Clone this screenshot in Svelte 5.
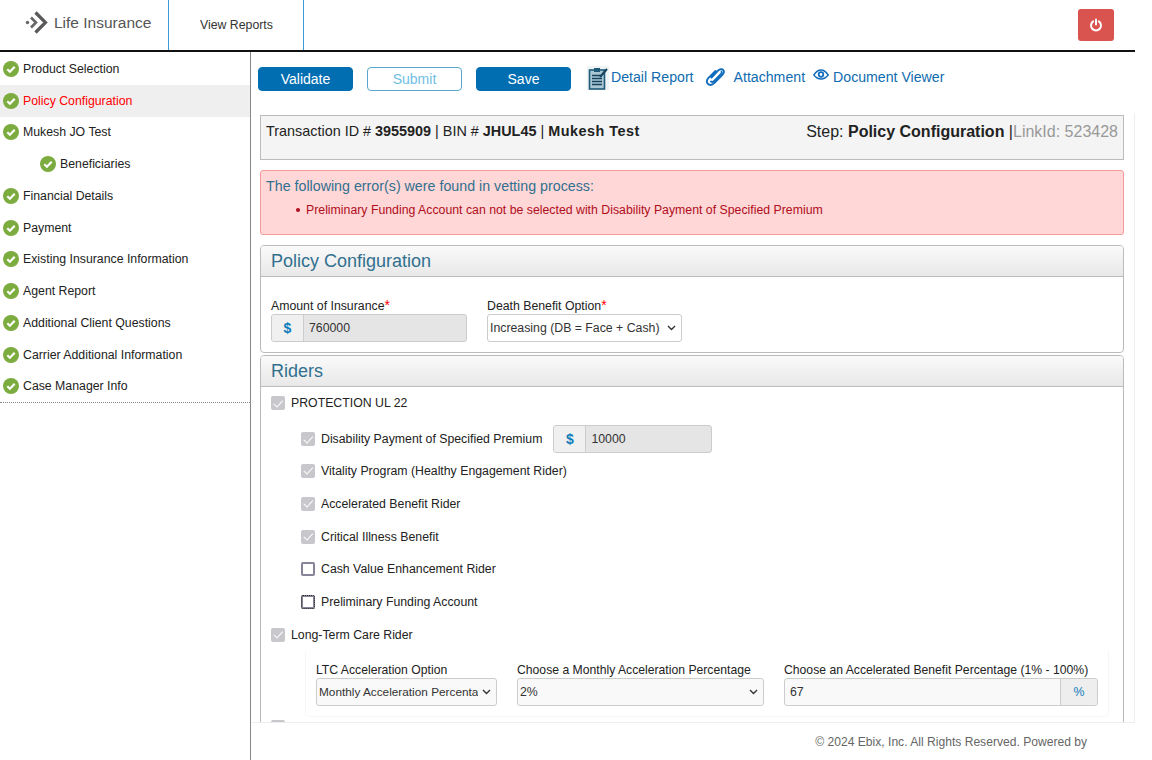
<script>
	const steps = [
		{ label: 'Product Selection' },
		{ label: 'Policy Configuration', active: true },
		{ label: 'Mukesh JO Test' },
		{ label: 'Beneficiaries', child: true },
		{ label: 'Financial Details' },
		{ label: 'Payment' },
		{ label: 'Existing Insurance Information' },
		{ label: 'Agent Report' },
		{ label: 'Additional Client Questions' },
		{ label: 'Carrier Additional Information' },
		{ label: 'Case Manager Info' }
	];

	const subRiders = [
		{ label: 'Vitality Program (Healthy Engagement Rider)', checked: true },
		{ label: 'Accelerated Benefit Rider', checked: true },
		{ label: 'Critical Illness Benefit', checked: true },
		{ label: 'Cash Value Enhancement Rider', checked: false },
		{ label: 'Preliminary Funding Account', checked: false, focus: true }
	];
</script>

<div class="page">
	<header class="topbar">
		<div class="brand">
			<svg class="logo" width="24" height="24" viewBox="0 0 24 24">
				<circle cx="2.5" cy="11.5" r="1.7" fill="#666" />
				<path d="M6 6.500l5 5-5 5" fill="none" stroke="#666" stroke-width="2.600" />
				<path d="M10.500 1.500L20.500 11.500 10.500 21.500" fill="none" stroke="#5a5a5a" stroke-width="3.200" />
			</svg>
			<span class="brand-name">Life Insurance</span>
		</div>
		<div class="nav-tab">View Reports</div>
		<div class="topbar-right">
			<button class="power" aria-label="Log out">
				<svg width="14" height="14" viewBox="0 0 14 14" fill="none" stroke="#fff" stroke-width="2" stroke-linecap="round">
					<path d="M4.200 3.300a5 5 0 1 0 5.600 0" />
					<path d="M7 1.500v5" />
				</svg>
			</button>
		</div>
	</header>

	<div class="body">
		<nav class="sidebar">
			<ul>
				{#each steps as step}
					<li class:active={step.active} class:child={step.child}>
						<svg class="tick" width="16" height="16" viewBox="0 0 16 16">
							<circle cx="8" cy="8" r="8" fill="#7cab3f" />
							<path d="M4.300 8.200l2.600 2.500 4.800-4.900" fill="none" stroke="#fff" stroke-width="2.200" />
						</svg>
						<span>{step.label}</span>
					</li>
				{/each}
			</ul>
		</nav>

		<div class="content">
			<main class="scroll">
				<div class="toolbar">
					<button class="btn primary">Validate</button>
					<button class="btn outline">Submit</button>
					<button class="btn primary">Save</button>
					<a class="tool detail">
						<svg width="22" height="24" viewBox="0 0 22 24">
							<rect width="22" height="24" fill="#eef4f6" />
							<rect x="2.500" y="4" width="15" height="19" fill="#a9c8d4" stroke="#1f5a78" stroke-width="1.600" />
							<rect x="7" y="2" width="6" height="4" fill="#1f5a78" />
							<path d="M5 9.500h10M5 12.500h10M5 15.500h10M5 18.500h10" stroke="#16425c" stroke-width="1.300" />
							<path d="M13 11l7-8" stroke="#16425c" stroke-width="2" />
						</svg>
						<span>Detail Report</span>
					</a>
					<a class="tool attach">
						<svg width="21" height="20" viewBox="0 0 20 20" fill="none" stroke="#0f6cbd" stroke-width="1.900" stroke-linecap="round">
							<path d="M6 10.500l6.500-6.800c1.800-1.800 4.300-1.700 5.200-.7 1 1.200.9 3-.8 4.800l-7.900 8c-2.200 2.200-5 2.500-6.700 1-1.600-1.500-1.200-4 .7-5.900l7-7" />
							<path d="M5.500 14.500c1 .8 2.200.5 3.200-.5l6.800-7c.8-.9 1-1.700.5-2.200" />
						</svg>
					</a>
					<a class="tool label-only">Attachment</a>
					<a class="tool viewer">
						<svg width="16" height="12" viewBox="0 0 16 12" fill="none" stroke="#0f6cbd">
							<path d="M.8 6C3 2.600 5.400 1 8 1s5 1.600 7.200 5C13 8.800 10.600 10 8 10S3 8.800 .8 6z" stroke-width="1.400" />
							<circle cx="8" cy="5.500" r="2.300" stroke-width="1.700" />
						</svg>
						<span>Document Viewer</span>
					</a>
				</div>

				<div class="txn">
					<div>
						Transaction ID # <b>3955909</b> | BIN # <b>JHUL45</b> | <b class="wide">Mukesh Test</b>
					</div>
					<div class="step">
						Step: <b>Policy Configuration</b> |<span class="link-id">LinkId: 523428</span>
					</div>
				</div>

				<div class="errors">
					<p>The following error(s) were found in vetting process:</p>
					<ul>
						<li>Preliminary Funding Account can not be selected with Disability Payment of Specified Premium</li>
					</ul>
				</div>

				<section class="panel">
					<h2>Policy Configuration</h2>
					<div class="panel-body config">
						<div class="field amount">
							<label for="amount">Amount of Insurance<i>*</i></label>
							<div class="group">
								<span class="addon dollar">$</span>
								<input id="amount" value="760000" disabled />
							</div>
						</div>
						<div class="field death">
							<label for="dbo">Death Benefit Option<i>*</i></label>
							<select id="dbo">
								<option>Increasing (DB = Face + Cash)</option>
							</select>
						</div>
					</div>
				</section>

				<section class="panel riders">
					<h2>Riders</h2>
					<div class="panel-body">
						<label class="check top">
							<input type="checkbox" checked disabled />
							<span>PROTECTION UL 22</span>
						</label>

						<div class="sub">
							<div class="check premium">
								<input type="checkbox" checked disabled />
								<span>Disability Payment of Specified Premium</span>
								<div class="group">
									<span class="addon dollar">$</span>
									<input value="10000" disabled aria-label="Premium" />
								</div>
							</div>
							<div class="rows">
								{#each subRiders as rider}
									<label class="check row">
										<input type="checkbox" checked={rider.checked} disabled={rider.checked} class:focus={rider.focus} />
										<span>{rider.label}</span>
									</label>
								{/each}
							</div>
						</div>

						<label class="check top">
							<input type="checkbox" checked disabled />
							<span>Long-Term Care Rider</span>
						</label>

						<div class="ltc-box">
							<div class="field opt">
								<label for="ltc">LTC Acceleration Option</label>
								<select id="ltc" class="soft narrow">
									<option>Monthly Acceleration Percentage</option>
								</select>
							</div>
							<div class="field pct">
								<label for="pct">Choose a Monthly Acceleration Percentage</label>
								<select id="pct" class="soft">
									<option>2%</option>
								</select>
							</div>
							<div class="field ben">
								<label for="ben">Choose an Accelerated Benefit Percentage (1% - 100%)</label>
								<div class="group light">
									<input id="ben" value="67" />
									<span class="addon percent">%</span>
								</div>
							</div>
						</div>

						<div class="check next">
							<input type="checkbox" checked disabled aria-label="Next rider" />
						</div>
					</div>
				</section>
			</main>

			<footer class="footer">© 2024 Ebix, Inc. All Rights Reserved. Powered by</footer>
		</div>
	</div>
</div>

<style>
	:global(body) {
		margin: 0;
		background: #fff;
	}

	.page {
		width: 1152px;
		height: 760px;
		overflow: hidden;
		display: flex;
		flex-direction: column;
		font-family: 'Liberation Sans', Arial, sans-serif;
		color: #222;
		font-size: 12.3px;
	}

	/* header */
	.topbar {
		width: 1135px;
		height: 50px;
		flex: none;
		display: flex;
		border-bottom: 2px solid #111;
	}

	.brand {
		width: 169px;
		display: flex;
		align-items: center;
		box-sizing: border-box;
		padding: 0 0 4px 25px;
		border-right: 1px solid #3a9ad9;
		gap: 5px;
	}

	.brand-name {
		font-size: 15.5px;
		color: #555;
	}

	.nav-tab {
		width: 135px;
		box-sizing: border-box;
		padding: 18px 0 0 31px;
		border-right: 1px solid #3a9ad9;
		color: #333;
	}

	.topbar-right {
		flex: 1;
		display: flex;
		justify-content: flex-end;
		padding: 9px 21px 0 0;
	}

	.power {
		width: 36px;
		height: 32px;
		border: 0;
		border-radius: 3px;
		background: #d9534f;
		padding: 0;
		display: flex;
		align-items: center;
		justify-content: center;
	}

	.body {
		flex: 1;
		display: flex;
		min-height: 0;
	}

	/* sidebar */
	.sidebar {
		width: 250px;
		flex: none;
		border-right: 1px solid #888;
	}

	.sidebar ul {
		list-style: none;
		margin: 1px 0 0;
		padding: 0;
		border-bottom: 1px dotted #888;
	}

	.sidebar li {
		height: 31.75px;
		box-sizing: border-box;
		display: flex;
		align-items: center;
		gap: 4px;
		padding-left: 3px;
		color: #222;
	}

	.sidebar li.child {
		padding-left: 40px;
	}

	.sidebar li.active {
		background: #efefef;
		color: #f00;
	}

	.tick {
		flex: none;
	}

	/* main column */
	.content {
		width: 884px;
		flex: none;
		display: flex;
		flex-direction: column;
		min-height: 0;
	}

	.scroll {
		flex: 1;
		min-height: 0;
		overflow: hidden;
		box-sizing: border-box;
		padding: 0 11px 0 9px;
		background: linear-gradient(#eee, #eee) right 61px / 1px 100% no-repeat;
	}

	.toolbar {
		height: 62px;
		display: flex;
		align-items: flex-start;
		box-sizing: border-box;
		padding-top: 15px;
		margin-left: -2px;
		font-size: 14.15px;
	}

	.btn {
		width: 95px;
		height: 24px;
		margin-right: 14px;
		padding: 0;
		box-sizing: border-box;
		border-radius: 4px;
		font: 14px 'Liberation Sans', Arial, sans-serif;
	}

	.primary {
		background: #026eb2;
		border: 1px solid #026eb2;
		color: #fff;
	}

	.outline {
		background: #fff;
		border: 1px solid #58a6cf;
		color: #6fc0e4;
	}

	.tool {
		color: #0f6cb0;
		display: flex;
	}

	.detail {
		margin-left: 2px;
		margin-top: -1px;
		gap: 2px;
	}

	.detail span {
		margin-top: 3px;
	}

	.attach {
		margin-left: 11px;
	}

	.label-only {
		margin-left: 8px;
		margin-top: 2px;
	}

	.viewer {
		margin-left: 8px;
		margin-top: 2px;
		gap: 4px;
	}

	.txn {
		height: 45px;
		box-sizing: border-box;
		display: flex;
		justify-content: space-between;
		border: 1px solid #bbb;
		background: #f4f4f4;
		padding: 7px 5px 0;
		font-size: 14.4px;
		color: #222;
		margin-top: 1px;
	}

	.txn .wide {
		letter-spacing: 0.5px;
	}

	.step {
		font-size: 16px;
	}

	.link-id {
		color: #999;
	}

	.errors {
		height: 65px;
		box-sizing: border-box;
		margin-top: 10px;
		border: 1px solid #f59a9a;
		border-radius: 3px;
		background: #ffd7d7;
		padding: 7px 5px 0;
	}

	.errors p {
		margin: 0;
		font-size: 14.25px;
		color: #31708f;
	}

	.errors ul {
		list-style: none;
		margin: 9px 0 0;
		padding-left: 40px;
		color: #b00d1a;
	}

	.errors li::before {
		content: '';
		display: inline-block;
		width: 4px;
		height: 4px;
		margin: 0 6px 2px -10px;
		border-radius: 50%;
		background: #b00d1a;
	}

	.panel {
		margin-top: 10px;
		height: 108px;
		box-sizing: border-box;
		border: 1px solid #bbb;
		border-radius: 4px;
	}

	.panel.riders {
		margin-top: 2px;
		height: auto;
	}

	.panel h2 {
		margin: 0;
		height: 31px;
		box-sizing: border-box;
		padding: 5px 10px 0;
		font-size: 18px;
		font-weight: normal;
		color: #31708f;
		background: linear-gradient(#fafafa, #e8e8e8);
		border-bottom: 1px solid #bbb;
		border-radius: 3px 3px 0 0;
	}

	.config {
		display: flex;
		gap: 20px;
		padding: 21px 10px 0;
	}

	.field {
		display: flex;
		flex-direction: column;
	}

	.field label {
		height: 16px;
		line-height: 16px;
		color: #222;
		white-space: nowrap;
	}

	.ltc-box .field label {
		font-size: 12.2px;
	}

	.field i {
		color: #f00;
		font-style: normal;
		font-size: 14px;
		line-height: 12px;
	}

	.amount {
		width: 196px;
	}

	.death {
		width: 195px;
	}

	.group {
		display: flex;
		height: 28px;
		box-sizing: border-box;
		border: 1px solid #ccc;
		border-radius: 3px;
		background: #e5e5e5;
		overflow: hidden;
	}

	.group input {
		flex: 1;
		min-width: 0;
		border: 0;
		background: transparent;
		padding: 0 5px;
		font: 12.3px 'Liberation Sans', Arial, sans-serif;
		color: #333;
	}

	.addon {
		background: #f0f0f0;
		display: flex;
		align-items: center;
		justify-content: center;
		color: #0f7cba;
	}

	.dollar {
		width: 31px;
		flex: none;
		border-right: 1px solid #ccc;
		font-weight: bold;
		font-size: 14px;
	}

	select {
		appearance: none;
		height: 28px;
		width: 100%;
		box-sizing: border-box;
		border: 1px solid #ccc;
		border-radius: 3px;
		background: #fff url("data:image/svg+xml,%3Csvg xmlns='http://www.w3.org/2000/svg' width='9' height='6'%3E%3Cpath d='M1 1l3.500 3.500L8 1' fill='none' stroke='%23333' stroke-width='1.400'/%3E%3C/svg%3E") no-repeat right 5px center;
		font: 12.3px 'Liberation Sans', Arial, sans-serif;
		color: #333;
		padding: 0 18px 0 2px;
	}

	select.soft {
		background-color: #f9f9f9;
	}

	select.narrow {
		font-size: 11.8px;
	}

	.group.light {
		background: #f9f9f9;
	}

	.percent {
		width: 36px;
		flex: none;
		border-left: 1px solid #ccc;
		background: #eee;
	}

	/* riders */
	.riders .panel-body {
		padding: 0 10px;
	}

	.check {
		display: flex;
		align-items: center;
		gap: 6px;
		color: #222;
	}

	.check > input {
		appearance: none;
		width: 14px;
		height: 14px;
		margin: 0;
		flex: none;
		box-sizing: border-box;
		border: 2px solid #86849a;
		border-radius: 2px;
		background: #fff;
		position: relative;
	}

	.check > input:checked {
		border: 0;
		background: #c8c8cc;
	}

	.check > input:checked::after {
		content: '';
		position: absolute;
		left: 4.500px;
		top: 1.500px;
		width: 3.500px;
		height: 7.500px;
		border: solid #fff;
		border-width: 0 1.800px 1.800px 0;
		transform: rotate(42deg);
	}

	.check > input.focus {
		outline: 1px dotted #222;
		outline-offset: -1px;
	}

	.top {
		height: 32px;
	}

	.sub {
		padding: 6px 0 0 30px;
	}

	.premium {
		height: 28px;
	}

	.premium .group {
		width: 159px;
		height: 28px;
		margin-left: 5px;
	}

	.rows {
		padding-top: 1.600px;
	}

	.row {
		height: 32.800px;
	}

	.ltc-box {
		display: flex;
		gap: 20px;
		margin-left: 34px;
		width: 804px;
		height: 66px;
		box-sizing: border-box;
		padding: 11px 10px 0;
		border: 1px solid #f6f6f6;
		border-top: 0;
		border-radius: 0 0 5px 5px;
	}

	.opt {
		width: 181px;
	}

	.pct {
		width: 247px;
	}

	.ben {
		width: 314px;
	}

	.next {
		padding-top: 3px;
	}

	.footer {
		height: 38px;
		flex: none;
		box-sizing: border-box;
		border-top: 1px solid #eee;
		padding: 12px 48px 0 0;
		text-align: right;
		color: #666;
		font-size: 12.1px;
		width: 884px;
	}
</style>
